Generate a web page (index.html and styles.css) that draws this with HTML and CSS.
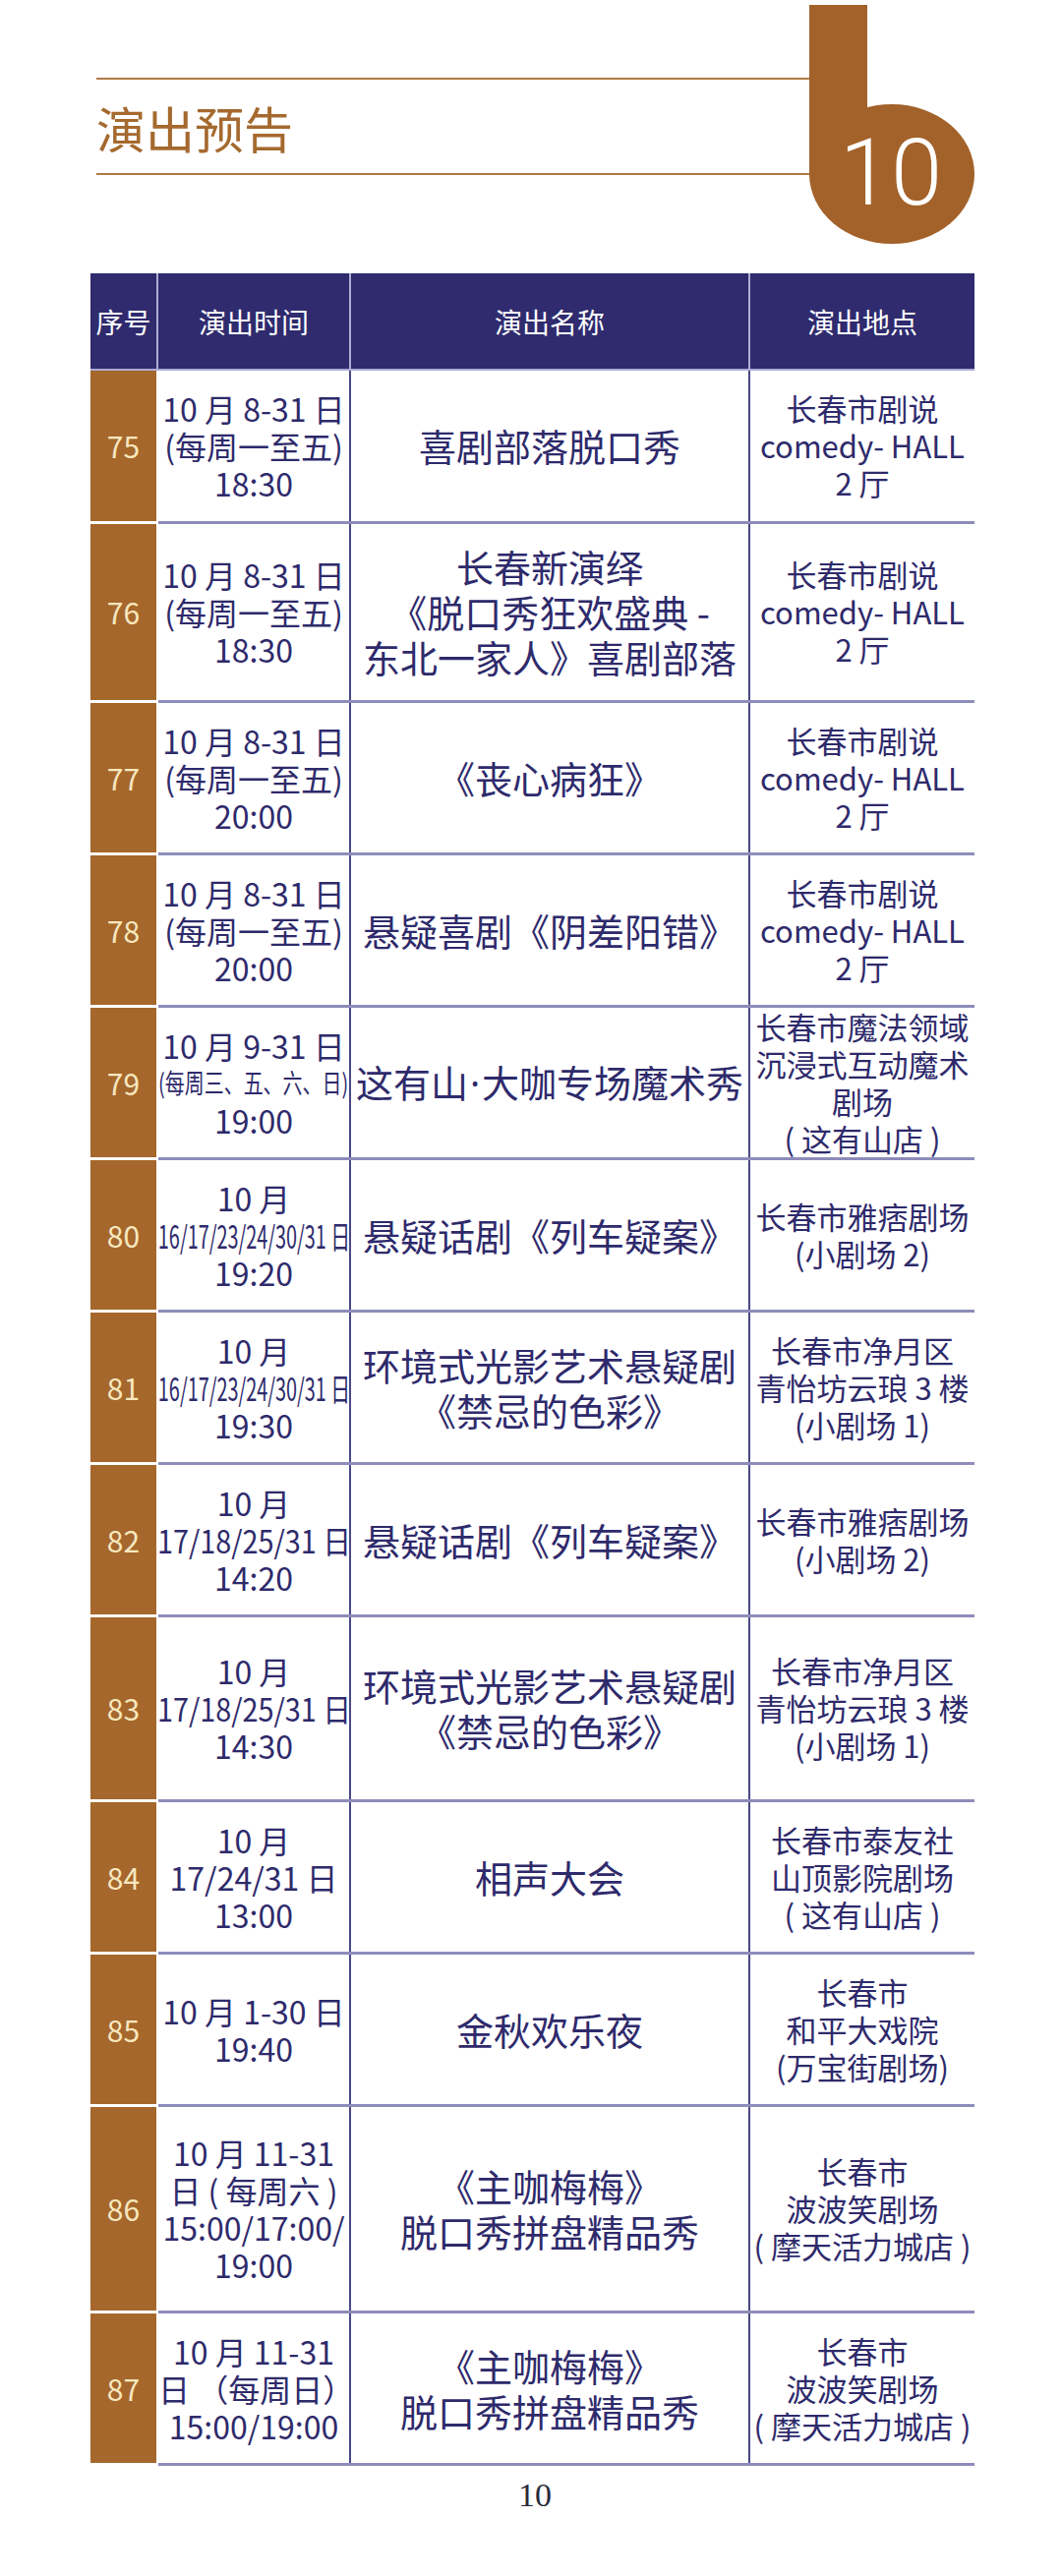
FILE: index.html
```html
<!DOCTYPE html>
<html lang="zh-CN">
<head>
<meta charset="utf-8">
<title>演出预告</title>
<link rel="stylesheet" href="styles.css">
</head>
<body>
<header class="masthead">
  <div class="title-block"><h1 class="title">演出预告</h1></div>
  <svg class="tab" viewBox="0 0 168 245" width="168" height="245" aria-label="10">
    <rect x="0" y="0" width="59" height="172" fill="#a3622a"/>
    <ellipse cx="84" cy="172" rx="84" ry="71" fill="#a3622a"/>
    <text x="83" y="203" text-anchor="middle" class="tab-num">10</text>
  </svg>
</header>

<table class="schedule">
  <colgroup>
    <col class="w-seq"><col class="w-time"><col class="w-name"><col class="w-loc">
  </colgroup>
  <thead>
    <tr><th>序号</th><th>演出时间</th><th>演出名称</th><th>演出地点</th></tr>
  </thead>
  <tbody>
    <tr>
      <td class="seq">75</td>
      <td class="time"><div>10 月 8-31 日</div><div>(每周一至五)</div><div>18:30</div></td>
      <td class="name"><div>喜剧部落脱口秀</div></td>
      <td class="loc"><div>长春市剧说</div><div>comedy- HALL</div><div>2 厅</div></td>
    </tr>
    <tr class="h182">
      <td class="seq">76</td>
      <td class="time"><div>10 月 8-31 日</div><div>(每周一至五)</div><div>18:30</div></td>
      <td class="name"><div>长春新演绎</div><div>《脱口秀狂欢盛典 -</div><div>东北一家人》喜剧部落</div></td>
      <td class="loc"><div>长春市剧说</div><div>comedy- HALL</div><div>2 厅</div></td>
    </tr>
    <tr>
      <td class="seq">77</td>
      <td class="time"><div>10 月 8-31 日</div><div>(每周一至五)</div><div>20:00</div></td>
      <td class="name"><div>《丧心病狂》</div></td>
      <td class="loc"><div>长春市剧说</div><div>comedy- HALL</div><div>2 厅</div></td>
    </tr>
    <tr>
      <td class="seq">78</td>
      <td class="time"><div>10 月 8-31 日</div><div>(每周一至五)</div><div>20:00</div></td>
      <td class="name"><div>悬疑喜剧《阴差阳错》</div></td>
      <td class="loc"><div>长春市剧说</div><div>comedy- HALL</div><div>2 厅</div></td>
    </tr>
    <tr>
      <td class="seq">79</td>
      <td class="time"><div>10 月 9-31 日</div><div class="squeeze small"><span class="sq-74">(每周三、五、六、日)</span></div><div>19:00</div></td>
      <td class="name"><div>这有山<span class="dot">·</span>大咖专场魔术秀</div></td>
      <td class="loc"><div>长春市魔法领域</div><div>沉浸式互动魔术</div><div>剧场</div><div>( 这有山店 )</div></td>
    </tr>
    <tr>
      <td class="seq">80</td>
      <td class="time"><div>10 月</div><div class="squeeze"><span class="sq-62">16/17/23/24/30/31 日</span></div><div>19:20</div></td>
      <td class="name"><div>悬疑话剧《列车疑案》</div></td>
      <td class="loc"><div>长春市雅痞剧场</div><div>(小剧场 2)</div></td>
    </tr>
    <tr>
      <td class="seq">81</td>
      <td class="time"><div>10 月</div><div class="squeeze"><span class="sq-62">16/17/23/24/30/31 日</span></div><div>19:30</div></td>
      <td class="name"><div>环境式光影艺术悬疑剧</div><div>《禁忌的色彩》</div></td>
      <td class="loc"><div>长春市净月区</div><div>青怡坊云琅 3 楼</div><div>(小剧场 1)</div></td>
    </tr>
    <tr>
      <td class="seq">82</td>
      <td class="time"><div>10 月</div><div class="squeeze"><span class="sq-90">17/18/25/31 日</span></div><div>14:20</div></td>
      <td class="name"><div>悬疑话剧《列车疑案》</div></td>
      <td class="loc"><div>长春市雅痞剧场</div><div>(小剧场 2)</div></td>
    </tr>
    <tr class="h188">
      <td class="seq">83</td>
      <td class="time"><div>10 月</div><div class="squeeze"><span class="sq-90">17/18/25/31 日</span></div><div>14:30</div></td>
      <td class="name"><div>环境式光影艺术悬疑剧</div><div>《禁忌的色彩》</div></td>
      <td class="loc"><div>长春市净月区</div><div>青怡坊云琅 3 楼</div><div>(小剧场 1)</div></td>
    </tr>
    <tr>
      <td class="seq">84</td>
      <td class="time"><div>10 月</div><div>17/24/31 日</div><div>13:00</div></td>
      <td class="name"><div>相声大会</div></td>
      <td class="loc"><div>长春市泰友社</div><div>山顶影院剧场</div><div>( 这有山店 )</div></td>
    </tr>
    <tr>
      <td class="seq">85</td>
      <td class="time"><div>10 月 1-30 日</div><div>19:40</div></td>
      <td class="name"><div>金秋欢乐夜</div></td>
      <td class="loc"><div>长春市</div><div>和平大戏院</div><div>(万宝街剧场)</div></td>
    </tr>
    <tr class="h210">
      <td class="seq">86</td>
      <td class="time"><div>10 月 11-31</div><div>日 ( 每周六 )</div><div>15:00/17:00/</div><div>19:00</div></td>
      <td class="name"><div>《主咖梅梅》</div><div>脱口秀拼盘精品秀</div></td>
      <td class="loc"><div>长春市</div><div>波波笑剧场</div><div>( 摩天活力城店 )</div></td>
    </tr>
    <tr>
      <td class="seq">87</td>
      <td class="time"><div>10 月 11-31</div><div>日 （每周日）</div><div>15:00/19:00</div></td>
      <td class="name"><div>《主咖梅梅》</div><div>脱口秀拼盘精品秀</div></td>
      <td class="loc"><div>长春市</div><div>波波笑剧场</div><div>( 摩天活力城店 )</div></td>
    </tr>
  </tbody>
</table>

<footer class="page-num">10</footer>
</body>
</html>
```

FILE: styles.css
```css
* { box-sizing: border-box; }

body {
  margin: 0;
  width: 1080px;
  background: #ffffff;
  font-family: "Noto Sans CJK SC", "Noto Sans", sans-serif;
  color: #2e2a6b;
}

/* ---------- masthead ---------- */
.masthead {
  display: flex;
  height: 278px;
  padding-left: 98px;
}

.title-block {
  flex: 1;
  margin-top: 79px;
  height: 99px;
  border-top: 2px solid #b07a46;
  border-bottom: 2px solid #b07a46;
  display: flex;
  align-items: center;
}

.title {
  margin: 0;
  font-size: 50px;
  line-height: 1;
  font-weight: 400;
  color: #a5692f;
}

.tab {
  flex: none;
  margin-top: 5px;
  margin-right: 89px;
  display: block;
}

.tab-num {
  fill: #ffffff;
  font-family: "Roboto", "Liberation Sans", sans-serif;
  font-weight: 300;
  font-size: 94px;
}

/* ---------- table ---------- */
.schedule {
  border-collapse: collapse;
  table-layout: fixed;
  width: 899px;
  margin-left: 92px;
}

.w-seq { width: 68px; }
.w-time { width: 196px; }
.w-name { width: 406px; }
.w-loc { width: 229px; }

.schedule thead tr { height: 98px; }

.schedule th {
  background: #2f2b6e;
  color: #ffffff;
  font-size: 28px;
  font-weight: 400;
  height: 98px;
  padding: 0;
  border-right: 2px solid #aeacd4;
  border-bottom: 2px solid #aeacd4;
  white-space: nowrap;
}

.schedule th:last-child { border-right: none; }

.schedule tbody tr { height: 155px; }
.schedule tbody tr.h182 { height: 182px; }
.schedule tbody tr.h188 { height: 188px; }
.schedule tbody tr.h210 { height: 210px; }

.schedule td {
  text-align: center;
  vertical-align: middle;
  padding: 0;
  white-space: nowrap;
  border-bottom: 3px solid #8e8cba;
  border-right: 2px solid #4a4784;
}

.schedule td.seq {
  background: #a5672b;
  color: #f7e7bf;
  font-size: 30px;
  border-bottom: 3px solid #ffffff;
  border-right: 2px solid #ffffff;
}

.schedule td.time {
  font-size: 32px;
  line-height: 38px;
}

.schedule td.name {
  font-size: 38px;
  line-height: 46px;
}

.schedule td.loc {
  font-size: 31px;
  line-height: 38px;
  border-right: none;
}

.dot {
  font-family: "Noto Sans", "Liberation Sans", sans-serif;
  padding: 0 2px;
}

.squeeze {
  display: flex;
  justify-content: center;
}

.squeeze > span {
  display: inline-block;
  flex: none;
}

.squeeze.small { font-size: 27px; }

.sq-62 { transform: scaleX(0.62); }
.sq-74 { transform: scaleX(0.74); }
.sq-90 { transform: scaleX(0.9); }

/* ---------- footer ---------- */
.page-num {
  margin-top: 10px;
  padding-left: 8px;
  text-align: center;
  font-family: "Liberation Serif", serif;
  font-size: 34px;
  line-height: 40px;
  color: #2a2a3a;
}
```
